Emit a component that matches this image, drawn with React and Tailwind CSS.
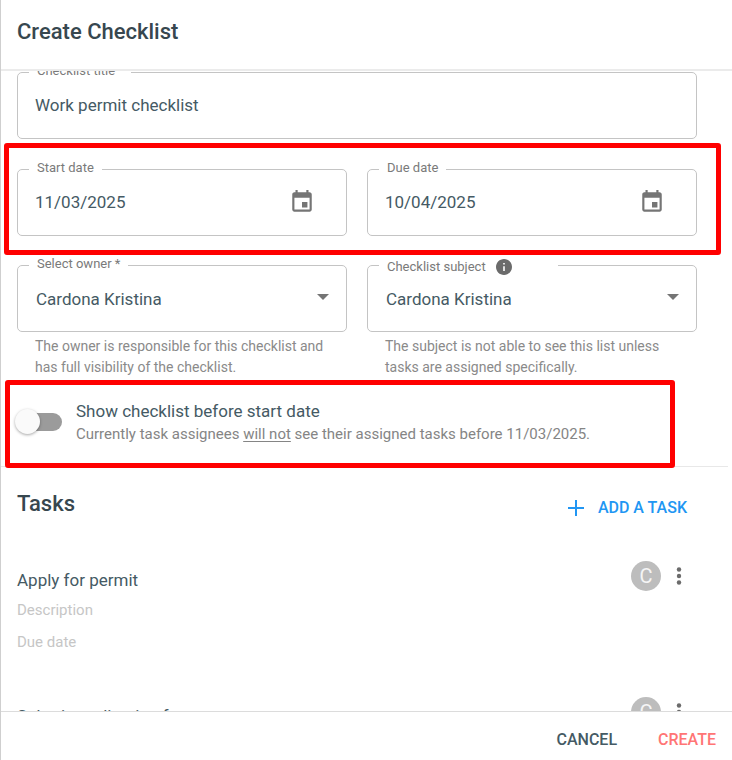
import { useState } from "react";

const tasks = [
  { id: "permit", name: "Apply for permit", initial: "C" },
  { id: "application", name: "Submit application for", initial: "C" },
];

function CalendarIcon() {
  return (
    <svg viewBox="0 0 24 24" className="size-[26px] fill-[#757575]" aria-hidden="true">
      <path d="M17 12h-5v5h5v-5zM16 1v2H8V1H6v2H5c-1.11 0-1.99.9-1.99 2L3 19c0 1.1.89 2 2 2h14c1.1 0 2-.9 2-2V5c0-1.1-.9-2-2-2h-1V1h-2zm3 18H5V8h14v11z" />
    </svg>
  );
}

function InfoIcon() {
  return (
    <svg viewBox="2 2 20 20" className="size-4 fill-[#6b6b6b]" aria-hidden="true">
      <path d="M12 2C6.48 2 2 6.48 2 12s4.48 10 10 10 10-4.48 10-10S17.52 2 12 2zm1 15h-2v-6h2v6zm0-8h-2V7h2v2z" />
    </svg>
  );
}

function Outlined({ id, label, info, wide, children }) {
  return (
    <fieldset className="min-w-0 rounded-[5px] border border-[#c4c4c4] pb-2 pl-[11px]">
      <legend className={wide ? "h-[15px] pl-2 pr-4" : "h-[15px] px-2"}>
        {info ? (
          <span className="flex h-[17px] items-center gap-2.5 pr-[38px]">
            <label htmlFor={id} className="text-[13px] leading-[15px] text-[#7a7a7a]">{label}</label>
            <InfoIcon />
          </span>
        ) : (
          <label htmlFor={id} className="block text-[13px] leading-[11px] text-[#7a7a7a]">{label}</label>
        )}
      </legend>
      {children}
    </fieldset>
  );
}

function DateField({ id, label, value }) {
  const [date, setDate] = useState(value);
  return (
    <Outlined id={id} label={label}>
      <div className="flex h-[50px] items-center pl-1.5 pr-[31px]">
        <input
          id={id}
          value={date}
          onChange={(e) => setDate(e.target.value)}
          className="h-12 min-w-0 flex-1 text-[17px] text-[#455a64] outline-none"
        />
        <button type="button" aria-label={"Choose " + label.toLowerCase()}>
          <CalendarIcon />
        </button>
      </div>
    </Outlined>
  );
}

function SelectField({ id, label, info, help }) {
  return (
    <div className="min-w-0">
      <Outlined id={id} label={label} info={info}>
        <div className="relative h-[50px]">
          <select id={id} className="h-full w-full appearance-none pl-[7px] pr-12 pt-1 text-[17px] text-[#455a64] outline-none">
            <option>Cardona Kristina</option>
          </select>
          <svg viewBox="0 0 12 6" className="pointer-events-none absolute right-[17px] top-[21px] h-1.5 w-3 fill-[#757575]" aria-hidden="true">
            <path d="M0 0h12L6 6z" />
          </svg>
        </div>
      </Outlined>
      <p className="mt-1 pl-[18px] pr-4 text-[14px] leading-[21px] text-[#8a8a8a]">{help}</p>
    </div>
  );
}

function Task({ task }) {
  return (
    <li className="flex h-[136px] items-start justify-between">
      <div className="pt-[7px]">
        <h3 className="text-[17px] leading-6 text-[#455a64]">{task.name}</h3>
        <p className="mt-2 text-[15px] leading-5 text-[#c6c6c6]">Description</p>
        <p className="mt-3 text-[15px] leading-5 text-[#c6c6c6]">Due date</p>
      </div>
      <div className="flex items-center gap-1.5 pr-1.5">
        <span className="flex size-[30px] items-center justify-center rounded-full bg-[#bdbdbd] text-[20px] leading-none text-[#f5f5f5]">
          {task.initial}
        </span>
        <button type="button" aria-label={"Options for " + task.name}>
          <svg viewBox="0 0 24 24" className="size-6 fill-[#6b6b6b]" aria-hidden="true">
            <circle cx="12" cy="5.5" r="2.2" />
            <circle cx="12" cy="12" r="2.2" />
            <circle cx="12" cy="18.5" r="2.2" />
          </svg>
        </button>
      </div>
    </li>
  );
}

export default function App() {
  const [title, setTitle] = useState("Work permit checklist");
  const [early, setEarly] = useState(false);
  return (
    <div className="flex h-screen flex-col overflow-hidden border-l border-[#cfcfcf] bg-white font-[Roboto,sans-serif]">
      <header className="flex h-[71px] shrink-0 items-center border-b-2 border-[#ebebeb] px-4 pb-1.5">
        <h1 className="text-[22px] font-medium leading-7 text-[#37474f]">Create Checklist</h1>
      </header>

      <main className="min-h-0 flex-1 overflow-hidden">
        <div className="-mt-1.5 pl-4 pr-[35px]">
          <Outlined id="title" label="Checklist title" wide>
            <input
              id="title"
              value={title}
              onChange={(e) => setTitle(e.target.value)}
              className="block h-[50px] w-full pl-1.5 text-[17px] text-[#455a64] outline-none"
            />
          </Outlined>

          <div className="relative mt-[23px] grid grid-cols-2 gap-5">
            <DateField id="start" label="Start date" value="11/03/2025" />
            <DateField id="due" label="Due date" value="10/04/2025" />
            <div className="pointer-events-none absolute -bottom-[19px] -left-[13px] -right-6 -top-[19px] rounded-[3px] border-5 border-[#ff0000]" />
          </div>

          <div className="mt-[22px] grid grid-cols-2 gap-5">
            <SelectField
              id="owner"
              label="Select owner *"
              help="The owner is responsible for this checklist and has full visibility of the checklist."
            />
            <SelectField
              id="subject"
              label="Checklist subject"
              info
              help="The subject is not able to see this list unless tasks are assigned specifically."
            />
          </div>

          <div className="relative mt-[21px] flex items-center gap-3.5">
            <label htmlFor="early" className="relative flex h-[26px] w-[45px] shrink-0 items-center justify-end">
              <input
                id="early"
                type="checkbox"
                role="switch"
                checked={early}
                onChange={(e) => setEarly(e.target.checked)}
                className="peer sr-only"
              />
              <span className="h-[18px] w-10 rounded-full bg-[#9b9b9b] peer-checked:bg-[#2196f3]" />
              <span className="absolute -left-0.5 top-0 size-[25px] rounded-full bg-[#fafafa] shadow-[0_1px_3px_rgba(0,0,0,0.35)] peer-checked:left-5" />
            </label>
            <div>
              <label htmlFor="early" className="block text-[17px] leading-6 text-[#455a64]">Show checklist before start date</label>
              <p className="text-[15px] leading-[22px] text-[#858585]">
                Currently task assignees <u className="underline-offset-2">will not</u> see their assigned tasks before 11/03/2025.
              </p>
            </div>
            <div className="pointer-events-none absolute -bottom-[23px] -left-3 -top-[19px] right-[22px] rounded-[3px] border-5 border-[#ff0000]" />
          </div>
        </div>

        <hr className="mr-1 mt-[21px] border-[#e8e8e8]" />

        <section className="pl-4 pr-[35px]">
          <div className="flex items-center justify-between pt-[23px]">
            <h2 className="pb-2 text-[22px] font-medium leading-7 text-[#37474f]">Tasks</h2>
            <button type="button" className="flex items-center gap-2.5 pr-2.5 text-[16px] font-medium leading-6 text-[#2196f3]">
              <svg viewBox="0 0 24 24" className="size-6" fill="none" stroke="currentColor" strokeWidth="2" aria-hidden="true">
                <path d="M12 4v16M4 12h16" />
              </svg>
              ADD A TASK
            </button>
          </div>
          <ul className="mt-[35px]">
            {tasks.map((task) => (
              <Task key={task.id} task={task} />
            ))}
          </ul>
        </section>
      </main>

      <footer className="flex h-[49px] shrink-0 items-center justify-end gap-[41px] border-t border-[#dcdcdc] pr-4 pt-2">
        <button type="button" className="text-[16px] font-medium leading-6 text-[#455a64]">CANCEL</button>
        <button type="button" className="text-[16px] font-medium leading-6 text-[#ff7575]">CREATE</button>
      </footer>
    </div>
  );
}
